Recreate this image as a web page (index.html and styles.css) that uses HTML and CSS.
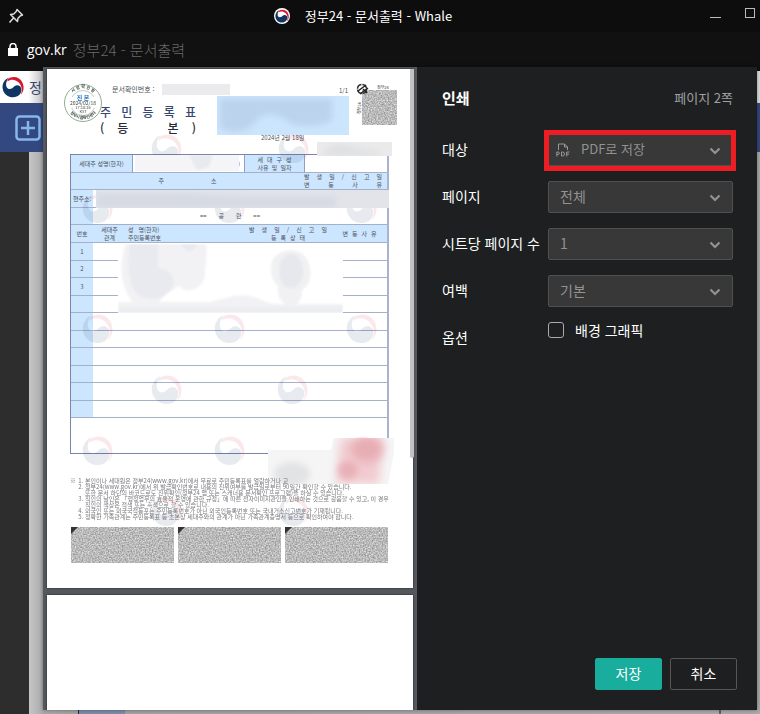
FILE: index.html
```html
<!DOCTYPE html>
<html lang="ko">
<head>
<meta charset="utf-8">
<title>정부24 - 문서출력 - Whale</title>
<link rel="stylesheet" href="styles.css">
</head>
<body>
<svg class="defs" aria-hidden="true">
  <defs>
    <symbol id="emblem" viewBox="0 0 32 32">
      <path class="navy" d="M10 2C3 5 0 12 1 18c1 8 8 13 15 13 8 0 13-6 12-12 0-5-6-7-10-4-2 2-4 4-7 4C5 18 4 9 10 2z"/>
      <path class="red" d="M8 5C15-1 26 1 30 10c3 7 1 14-3 18 3-7 2-14-3-19C19 5 13 4 8 8z"/>
    </symbol>
    <symbol id="chevron" viewBox="0 0 12 8"><path d="M1.500 1.500 6 6l4.500-4.500" fill="none" stroke="currentColor" stroke-width="2.200"/></symbol>
    <filter id="noise" x="0" y="0" width="1" height="1" color-interpolation-filters="sRGB">
      <feTurbulence type="fractalNoise" baseFrequency="0.7" numOctaves="1"/>
      <feColorMatrix values=".600 0 0 0 .43  .600 0 0 0 .43  .600 0 0 0 .43  0 0 0 0 1"/>
    </filter>
    <filter id="haze" x="-.1" y="-.1" width="1.200" height="1.200"><feGaussianBlur stdDeviation="1"/></filter>
    <filter id="soft" x="-.3" y="-.3" width="1.600" height="1.600"><feGaussianBlur stdDeviation="3"/></filter>
    <filter id="softer" x="-.3" y="-.3" width="1.600" height="1.600"><feGaussianBlur stdDeviation="5"/></filter>
  </defs>
</svg>

<header class="titlebar">
  <svg class="pin" viewBox="0 0 16 16" aria-hidden="true"><path d="M9 1.500 14.500 7l-2 .8-2.500 2.500-.5 3.200L2.500 6.500l3.200-.5L8.200 3.500zM5.500 10 1.500 14.500"/></svg>
  <div class="window-name"><span class="favicon"><svg aria-hidden="true"><use href="#emblem"/></svg></span><span>정부24 - 문서출력 - Whale</span></div>
  <div class="window-buttons">
    <button class="minimize" aria-label="최소화"></button>
    <button class="maximize" aria-label="최대화"></button>
  </div>
</header>
<div class="address">
  <svg class="lock" viewBox="0 0 10 13" aria-hidden="true"><path d="M0 5h10v8H0z" fill="#fff"/><path d="M2 6V3.500a3 3 0 0 1 6 0V6" fill="none" stroke="#fff" stroke-width="1.500"/></svg>
  <span class="host">gov.kr</span><span class="page-name">정부24 - 문서출력</span>
</div>

<main class="stage">
  <div class="site">
    <div class="site-brand"><svg aria-hidden="true"><use href="#emblem"/></svg><span>정</span></div>
    <div class="site-tools"><svg viewBox="0 0 26 26" aria-hidden="true"><rect x="1.500" y="1.500" width="23" height="23" rx="3"/><path d="M13 6v14M6 13h14"/></svg></div>
    <div class="site-body"><div class="site-rail"></div><div class="site-content"><i class="site-cell"></i><i class="site-line"></i></div></div>
  </div>

  <section class="dialog" role="dialog" aria-label="인쇄">
    <div class="preview">
      <i class="scroll-thumb"></i>
      <article class="sheet doc">
        <div class="doc-head">
          <div class="doc-title">
            <p class="doc-number">문서확인번호 :</p>
            <h2 class="spread title-main">주 민 등 록 표</h2>
            <p class="spread title-sub">( 등 &nbsp; 본 )</p>
          </div>
          <div class="doc-meta"><span class="doc-page">1/1</span><span>2024년 2월 18일</span></div>
          <svg class="qr" viewBox="0 0 40 42" aria-hidden="true">
            <rect x="5" y="7" width="35" height="35" filter="url(#noise)"/>
            <circle cx="5" cy="6" r="4.500" fill="none" stroke="#333" stroke-width="1.500" stroke-dasharray="6 1"/>
            <path d="M1 8 9 2M3 11l8-6M6 6l4 4" stroke="#222" stroke-width="1.500"/>
            <text x="20" y="6" font-size="4">정부24</text>
            <text x="-31" y="4" font-size="4" transform="rotate(-90)">정부24</text>
          </svg>
        </div>

        <div class="form">
          <table>
            <colgroup><col class="c-no"><col class="c-name"><col class="c-value"><col class="c-reason"><col></colgroup>
            <tbody>
              <tr><th colspan="2">세대주 성명(한자)</th><td class="paren">)</td><th><p class="spread w-reason">세 대 구 성</p><p class="spread w-reason">사유 및 일자</p></th><td></td></tr>
              <tr><th colspan="4"><p class="spread w-address">주 소</p></th><th class="open event-cell"><p class="spread w-event">발 생 일 / 신 고 일</p><p class="spread w-event">변 동 사 유</p></th></tr>
              <tr><th class="open">현주소:</th><td colspan="4" class="open"></td></tr>
              <tr><th class="open"></th><td colspan="4" class="open blank-cell"><p class="spread w-blank">== 공 란 ==</p></td></tr>
            </tbody>
          </table>
          <table>
            <colgroup><col class="c-no"><col class="c-rel"><col class="c-person"><col class="c-event"><col></colgroup>
            <thead>
              <tr><th>번호</th><th>세대주<br>관계</th><th class="left">성 &nbsp; 명(한자)<br>주민등록번호</th><th><p class="spread w-event">발 생 일 / 신 고 일</p><p class="spread w-state">등 록 상 태</p></th><th><p class="spread w-state">변 동 사 유</p></th></tr>
            </thead>
            <tbody class="members">
              <tr><th>1</th><td colspan="4"></td></tr>
              <tr><th>2</th><td colspan="4"></td></tr>
              <tr><th>3</th><td colspan="4"></td></tr>
              <tr><th></th><td colspan="4"></td></tr>
              <tr><th></th><td colspan="4"></td></tr>
              <tr><th></th><td colspan="4"></td></tr>
              <tr><th></th><td colspan="4"></td></tr>
              <tr><th></th><td colspan="4"></td></tr>
              <tr><th></th><td colspan="4"></td></tr>
              <tr><th></th><td colspan="4"></td></tr>
              <tr class="rest"><td colspan="5"></td></tr>
            </tbody>
          </table>
        </div>

        <div class="notes">
          <span>※</span>
          <ol>
            <li>본인이나 세대원은 정부24(www.gov.kr)에서 무료로 주민등록표를 열람하거나 교</li>
            <li>정부24(www.gov.kr)에서 위 발급확인번호로 내용의 진위여부를 발급일로부터 90일간 확인할 수 있습니다.<br>또한 문서 하단의 바코드로도 진위확인(정부24 앱 또는 스캐너용 문서확인 프로그램)을 하실 수 있습니다.</li>
            <li>직인의 날인은 「행정업무의 효율적 운영에 관한 규정」에 따른 전자이미지관인을 인쇄하는 것으로 갈음할 수 있고, 이 경우<br>직인의 색상은 적색 또는 흑색으로 할 수 있습니다.</li>
            <li>외국인 또는 외국국적동포는 주민등록번호가 아닌 외국인등록번호 또는 국내거소신고번호가 기재됩니다.</li>
            <li>정확한 가족관계는 주민등록표 등·초본상 세대주와의 관계가 아닌 가족관계증명서 등으로 확인하여야 합니다.</li>
          </ol>
        </div>

        <div class="barcodes">
          <svg aria-hidden="true"><rect width="100%" height="100%" filter="url(#noise)"/><path d="M0 0h7L0 7z" fill="#333"/></svg>
          <svg aria-hidden="true"><rect width="100%" height="100%" filter="url(#noise)"/><path d="M0 0h7L0 7z" fill="#333"/></svg>
          <svg aria-hidden="true"><rect width="100%" height="100%" filter="url(#noise)"/><path d="M0 0h7L0 7z" fill="#333"/></svg>
        </div>

        <svg class="overlay" viewBox="0 0 366 519" aria-hidden="true">
          <g class="watermarks">
            <use href="#emblem" x="104" y="64" width="31" height="31"/><use href="#emblem" x="231" y="64" width="31" height="31"/>
            <use href="#emblem" x="35" y="124" width="31" height="31"/><use href="#emblem" x="167" y="124" width="31" height="31"/><use href="#emblem" x="299" y="124" width="31" height="31"/>
            <use href="#emblem" x="35" y="244" width="31" height="31"/><use href="#emblem" x="167" y="244" width="31" height="31"/><use href="#emblem" x="299" y="244" width="31" height="31"/>
            <use href="#emblem" x="104" y="305" width="31" height="31"/><use href="#emblem" x="230" y="305" width="31" height="31"/>
            <use href="#emblem" x="35" y="366" width="31" height="31"/><use href="#emblem" x="167" y="366" width="31" height="31"/><use href="#emblem" x="299" y="366" width="31" height="31"/>
            <use href="#emblem" x="104" y="427" width="31" height="31"/><use href="#emblem" x="231" y="427" width="31" height="31"/>
          </g>
          <rect x="115" y="15" width="68" height="11" fill="#ebebed"/>
          <svg x="170" y="27" width="132" height="39"><rect width="132" height="39" fill="#cbe5fd"/><path d="M3 3h112v20c-8 8-30 8-42 4-10-10-26-12-34-2-8 12-28 14-36 6z" fill="#bbd3ec" filter="url(#soft)"/></svg>
          <svg x="270" y="73" width="75" height="14"><rect width="75" height="14" fill="#eaeaeb"/><path d="M5 14Q12-2 32 4t30 5v5z" fill="#dfe0e2" filter="url(#soft)"/></svg>
          <svg x="88" y="86" width="104" height="16"><rect width="104" height="16" fill="#f5f5f7"/><path d="M54 0h24l-4 12-12 3z" fill="#e9eaed" filter="url(#haze)"/></svg>
          <svg x="49" y="121" width="293" height="18"><rect width="293" height="18" fill="#e2e4ea"/><path d="M0 3h90l60 3h90v12H0z" fill="#d6dae3" filter="url(#soft)"/></svg>
          <svg x="71" y="175" width="225" height="69">
            <rect width="225" height="69" fill="#fff"/>
            <g filter="url(#haze)">
              <path d="M8 0h80c2 12-1 20-1 31-2 14-18 20-26 11-8 5-14 8-20 16h50l25-6c20-4 28 7 42 8h67v9H0V58h15C0 42 2 14 8 0z" fill="#f2f2f4"/>
              <path d="M12 0h28v24c18 2 20 18 7 27-10 7-27 4-31-5C9 33 10 14 12 0zM63 0h16q-8 15-16 0z" fill="#e8eaef"/>
              <path d="M155 15c8-11 28-13 35 2 5 13 2 24-6 29 0 12-4 14-12 16-11-3-13-11-12-20-7-6-9-17-5-27z" fill="#f1f1f3"/><ellipse cx="173" cy="27" rx="12" ry="17" fill="#e6e8ee"/><path d="M0 63h225v6H0z" fill="#ebedf1"/>
            </g>
          </svg>
          <svg x="221" y="369" width="128" height="46">
            <path d="M0 12h63L66 0h60v15l-6 31H0z" fill="#f5f5f6"/><ellipse cx="24" cy="36" rx="18" ry="12" fill="#e2e3e4" filter="url(#soft)"/>
            <path d="M72 0h43l-4 46H68z" fill="#f1cbd0" filter="url(#softer)"/><ellipse cx="99" cy="11" rx="16" ry="13" fill="#e7adb4" filter="url(#softer)"/><ellipse cx="80" cy="32" rx="10" ry="9" fill="#e8b1b7" filter="url(#soft)"/>
          </svg>
          <g class="stamp" transform="translate(36 34)">
            <circle r="18.500" fill="#fff" stroke="#8fae92"/><circle r="12.500" fill="none" stroke="#8fae92" stroke-width=".6"/>
            <path id="arc-top" d="M-13.500 3A14 14 0 1 1 13.500 3" fill="none"/><path id="arc-bottom" d="M-17-1A17 17 0 0 0 17-1" fill="none"/>
            <path d="M-14-6h28v11h-28z" fill="#fff"/>
            <text font-size="4" font-weight="700"><textPath href="#arc-top" startOffset="50%">시 점 확 인 필</textPath></text>
            <text font-size="4" font-weight="700"><textPath href="#arc-bottom" startOffset="50%">정부시점확인센터</textPath></text>
            <text class="genuine" y="-3" font-size="6">진 본</text><text y="2" font-size="5">2024/02/18</text><text y="6" font-size="4">17:10:26</text><text y="10" font-size="4">KST</text>
          </g>
        </svg>
      </article>
      <div class="sheet next"></div>
    </div>

    <form class="settings">
      <div class="settings-head"><h1>인쇄</h1><span>페이지 2쪽</span></div>
      <div class="row">
        <label for="target">대상</label>
        <div class="select highlighted with-icon">
          <select id="target"><option>PDF로 저장</option></select>
          <svg class="pdf" viewBox="0 0 14 14" aria-hidden="true"><path d="M2.500 7V1h6l3 3v3M8.500 1v3h3M.8 13.500V9h1.500q1 0 1 1.200t-1 1.200H.8M5.500 9v4h1q2 0 2-2t-2-2zM10.700 13.500V9h2.800m-2.800 2.200h2.300"/></svg>
          <svg class="chevron" aria-hidden="true"><use href="#chevron"/></svg>
        </div>
      </div>
      <div class="row">
        <label for="pages">페이지</label>
        <div class="select"><select id="pages"><option>전체</option></select><svg class="chevron" aria-hidden="true"><use href="#chevron"/></svg></div>
      </div>
      <div class="row">
        <label for="per-sheet">시트당 페이지 수</label>
        <div class="select"><select id="per-sheet"><option>1</option></select><svg class="chevron" aria-hidden="true"><use href="#chevron"/></svg></div>
      </div>
      <div class="row">
        <label for="margins">여백</label>
        <div class="select"><select id="margins"><option>기본</option></select><svg class="chevron" aria-hidden="true"><use href="#chevron"/></svg></div>
      </div>
      <div class="row">
        <span>옵션</span>
        <label class="check"><input type="checkbox"><span>배경 그래픽</span></label>
      </div>
      <div class="actions"><button type="button" class="save">저장</button><button type="button" class="cancel">취소</button></div>
    </form>
  </section>
</main>
</body>
</html>
```
FILE: styles.css
```css
* { box-sizing: border-box; }
body {
  margin: 0;
  min-height: 100vh;
  display: flex;
  flex-direction: column;
  background: #111;
  color: #fff;
  font: 14px/20px "Noto Sans CJK KR", "Noto Sans", sans-serif;
  overflow: hidden;
}
h1, h2, p, ol { margin: 0; padding: 0; font-size: inherit; font-weight: inherit; }
svg { display: block; }
button, select { font: inherit; }
.defs { position: absolute; width: 0; height: 0; }
.navy { fill: #0f3562; }
.red { fill: #d8172f; }

.titlebar { display: flex; align-items: center; height: 32px; padding-left: 8px; background: #0d0d0d; }
.pin { width: 16px; height: 16px; fill: none; stroke: #ddd; stroke-width: 1.5; stroke-linejoin: round; }
.window-name { flex: 1; display: flex; justify-content: center; align-items: center; gap: 15px; font-size: 13px; padding-right: 8px; }
.favicon { padding: 1px; width: 16px; height: 16px; border-radius: 50%; background: #fff; }
.favicon svg { width: 14px; height: 14px; }
.window-buttons { display: flex; align-items: flex-end; gap: 24px; padding: 0 5px 6px 0; }
.window-buttons button { padding: 0; background: none; border: 0; width: 11px; height: 10px; }
.window-buttons .minimize { border-bottom: 1px solid #bbb; }
.window-buttons .maximize { border: 1px solid #bbb; width: 10px; }

.address { display: flex; align-items: center; height: 35px; padding-left: 8px; font-size: 15px; }
.lock { width: 10px; height: 13px; margin-right: 9px; }
.host { font: 14px/20px "Open Sans", sans-serif; margin-right: 6px; }
.page-name { color: #696969; font-weight: 300; }

.stage { flex: 1; position: relative; display: flex; }
.site { flex: 1; padding-top: 4px; display: flex; flex-direction: column; }
.site-brand { height: 32px; background: linear-gradient(90deg, #fff 28px, #bbb 44px, #ddd); display: flex; align-items: center; gap: 5px; padding-left: 2px; color: #34486d; }
.site-brand svg { width: 22px; height: 22px; }
.site-tools { height: 49px; padding: 12px 15px; background: #32487e; }
.site-tools svg { width: 26px; height: 26px; fill: none; stroke: #86b6ef; stroke-width: 2.5; }
.site-body { flex: 1; display: flex; }
.site-rail { width: 29px; background: #2d2d2d; }
.site-content { flex: 1; display: flex; align-items: flex-end; justify-content: space-between; padding: 0 39px 0 49px; background: linear-gradient(90deg, #c6c6c6, #aaa 14px, #a1a1a1 50px, #aaa); }
.site-cell { width: 47px; height: 4px; background: #7d8ea8; border-left: 1px solid #172b4d; }
.site-line { width: 2px; height: 4px; background: #596173; }

.dialog { position: absolute; inset: 0 3px 4px 43px; display: flex; background: #1d1f20; overflow: hidden; box-shadow: 0 0 4px #0006; }
.preview { flex: 0 0 374px; position: relative; display: flex; flex-direction: column; gap: 7px; padding: 2px 4px 0; background: #55595d; overflow: hidden; }
.scroll-thumb { position: absolute; z-index: 2; top: 2px; right: 3px; width: 4px; height: 389px; background: #c2c2c2; border-radius: 0 0 3px 3px; }
.sheet { background: #fff; box-shadow: 0 0 2px #222; }
.next { flex: 1; }

.doc { position: relative; padding: 0 24px 25px 23px; color: #4d5058; font-size: 6px; line-height: 8px; }
.overlay { position: absolute; inset: 0; width: 100%; height: auto; }
.spread { text-align: justify; text-align-last: justify; }
.doc-head { display: flex; height: 85px; padding-top: 14px; }
.doc-title { width: 96px; margin-left: 30px; }
.doc-number { padding-left: 12px; font-size: 7px; line-height: 12px; white-space: nowrap; }
.title-main { margin-top: 8px; font-size: 12px; line-height: 18px; color: #37486f; font-weight: 500; }
.title-sub { font-size: 12px; line-height: 14px; color: #272b38; font-weight: 500; }
.doc-meta { display: flex; flex-direction: column; justify-content: space-between; width: 87px; margin-left: auto; padding: 4px 0 12px; }
.doc-page { text-align: right; }
.qr { width: 40px; height: 42px; margin: 0 -8px 0 9px; overflow: visible; }
.qr text { fill: #333; }

.form { border: 1px solid #7886ac; border-right: 2px solid #a9b3d0; }
.form table { width: 100%; table-layout: fixed; border-collapse: separate; border-spacing: 0; }
.form tr { height: 18px; }
.form tr:nth-child(even) { height: 17px; }
.form tr.rest { height: 35px; }
.form th, .form td { padding: 0; border-bottom: 1px solid #a5b0cb; text-align: center; line-height: 8px; font-weight: 400; white-space: nowrap; }
.form th { background: #cce6ff; }
.form th + td:not(.open), .form td + th { border-left: 1px solid #8fa0c6; }
.form .members th + td { border-left: 0; }
.form .rest td { border-bottom: 0; }
.form .left { text-align: left; padding-left: 2px; }
.form .paren { text-align: right; padding-right: 4px; }
.form .blank-cell { padding-right: 20px; }
.form .event-cell { padding-right: 6px; }
.c-no { width: 22px; }
.c-name { width: 39px; }
.c-value { width: 112px; }
.c-reason { width: 60px; }
.c-rel { width: 33px; }
.c-person { width: 118px; }
.c-event { width: 88px; }
.form p { margin: 0 auto; }
.w-reason { width: 34px; }
.w-address { width: 58px; }
.w-event { width: 78px; }
.w-state { width: 34px; }
.w-blank { width: 60px; }

.notes { position: relative; z-index: 1; display: flex; gap: 2px; margin-top: 24px; line-height: 6px; font-size: 6px; color: #77787c; white-space: nowrap; }
.notes ol { padding-left: 7px; }
.barcodes { display: grid; grid-template-columns: repeat(3, 1fr); gap: 4px; margin-top: 7px; padding: 0 1px; }
.barcodes svg { width: 100%; height: 36px; }
.watermarks { opacity: .1; }
.stamp text { text-anchor: middle; fill: #3f4a45; }
.stamp .genuine { fill: #1d6fc0; font-weight: 700; }

.settings { flex: 1; display: flex; flex-direction: column; padding: 0 24px 20px 25px; }
.settings-head { display: flex; align-items: center; justify-content: space-between; height: 59px; padding-top: 2px; }
.settings h1 { font-size: 15px; font-weight: 700; }
.settings-head span { font-size: 13px; color: #a0a0a0; }
.row { display: grid; grid-template-columns: 106px 1fr; align-items: center; height: 47px; white-space: nowrap; }
.row > label:first-child, .row > span { padding-bottom: 2px; }
.select { position: relative; height: 32px; }
.select select { width: 100%; height: 32px; padding: 0 11px 2px; appearance: none; color: #929292; background: #383838; border: 1px solid #505050; border-radius: 2px; }
.select.with-icon select { padding-left: 32px; font-size: 13px; }
.highlighted::after { content: ""; position: absolute; inset: -4px -3px -5px -4px; border: 5px solid #ee1c23; pointer-events: none; }
.chevron { position: absolute; right: 12px; top: 13px; width: 12px; height: 8px; color: #929292; pointer-events: none; }
.pdf { position: absolute; left: 8px; top: 9px; width: 14px; height: 14px; fill: none; stroke: #999; }
.check { display: flex; align-items: center; gap: 11px; align-self: start; padding-top: 6px; }
.check input { appearance: none; margin: 0; width: 16px; height: 16px; border: 1px solid #aaa; border-radius: 3px; }
.actions { display: flex; justify-content: flex-end; gap: 8px; margin-top: auto; margin-right: -4px; }
.actions button { width: 67px; height: 32px; padding: 0 0 2px; color: #fff; border: 1px solid #555; border-radius: 2px; background: none; }
.actions .save { background: #18ad9d; border-color: #18ad9d; }
```
